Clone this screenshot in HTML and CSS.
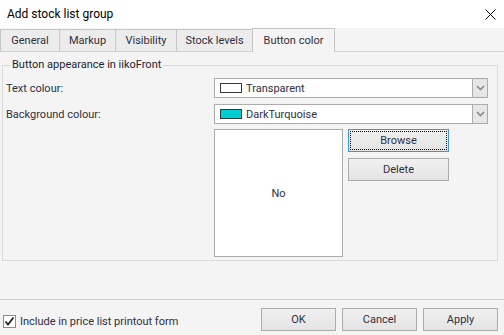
FILE: index.html
```html
<!DOCTYPE html>
<html>
  <head>
    <link rel="stylesheet" href="styles.css">
  </head>
  <body>
    <div class="window">
      <div class="titlebar">
        <span>Add stock list group</span>
        <svg class="close" width="11" height="11" viewBox="0 0 11 11">
          <path d="M0.5 0.5 L10.5 10.5 M10.5 0.5 L0.5 10.5" stroke="#000" stroke-width="1" fill="none"/>
        </svg>
      </div>
      <div class="tabs">
        <div class="tab tab-general">General</div>
        <div class="tab tab-markup">Markup</div>
        <div class="tab tab-visibility">Visibility</div>
        <div class="tab tab-stock">Stock levels</div>
        <div class="tab active">Button color</div>
      </div>
      <div class="page">
        <fieldset class="group">
          <legend>Button appearance in iikoFront</legend>
          <div class="row">
            <label>Text colour:</label>
            <div class="combo">
              <span class="swatch"></span>
              <span class="combo-text">Transparent</span>
              <span class="arrow">
                <svg width="9" height="6" viewBox="0 0 9 6"><path d="M1 1 L4.5 4.5 L8 1" stroke="#8a8a8a" stroke-width="1.6" fill="none"/></svg>
              </span>
            </div>
          </div>
          <div class="row">
            <label>Background colour:</label>
            <div class="combo">
              <span class="swatch turquoise"></span>
              <span class="combo-text">DarkTurquoise</span>
              <span class="arrow">
                <svg width="9" height="6" viewBox="0 0 9 6"><path d="M1 1 L4.5 4.5 L8 1" stroke="#8a8a8a" stroke-width="1.6" fill="none"/></svg>
              </span>
            </div>
          </div>
          <div class="image-row">
            <div class="picture">No</div>
            <div class="pic-buttons">
              <button class="btn focused">Browse</button>
              <button class="btn">Delete</button>
            </div>
          </div>
        </fieldset>
      </div>
      <div class="footer">
        <label class="check">
          <span class="checkbox">
            <svg width="11" height="11" viewBox="0 0 11 11"><path d="M1.5 5.5 L4 8.5 L9.5 1.5" stroke="#222" stroke-width="1.8" fill="none"/></svg>
          </span>
          Include in price list printout form
        </label>
        <div class="actions">
          <button class="btn wide">OK</button>
          <button class="btn wide">Cancel</button>
          <button class="btn wide">Apply</button>
        </div>
      </div>
    </div>
  </body>
</html>
```

FILE: styles.css
```css
html, body {
  margin: 0;
  padding: 0;
}

body {
  width: 504px;
  height: 335px;
  overflow: hidden;
  background-color: #f4f4f4;
  color: #30303f;
  font-family: Roboto, "Liberation Sans", sans-serif;
  font-size: 11px;
}

.window {
  display: flex;
  flex-direction: column;
  height: 335px;
}

.titlebar {
  height: 28px;
  background-color: #fff;
  display: flex;
  align-items: center;
  justify-content: space-between;
  padding: 0 8px 0 7px;
  font-size: 12px;
  color: #000;
}

.tabs {
  display: flex;
  align-items: flex-start;
  height: 23px;
  border-bottom: 1px solid #d2d2d2;
}

.tab {
  box-sizing: border-box;
  margin-top: 1px;
  height: 22px;
  border: 1px solid #c6c6c6;
  border-right: none;
  border-bottom: none;
  background-color: #ececec;
  display: flex;
  align-items: center;
  justify-content: center;
}

.tab-general { width: 59px; }
.tab-markup { width: 56px; }
.tab-visibility { width: 61px; }
.tab-stock { width: 76px; }

.tab.active {
  margin-top: 0;
  height: 24px;
  width: 83px;
  border-right: 1px solid #c6c6c6;
  background-color: #f4f4f4;
  padding-bottom: 1px;
}

.page {
  flex: 1;
}

.group {
  box-sizing: border-box;
  width: 496px;
  min-width: 0;
  margin: 6px 0 0 2px;
  padding: 6px 0 3px 3px;
  border: 1px solid #dadada;
}

.group legend {
  margin-left: 4px;
  padding: 0 2px;
  line-height: 14px;
  color: #1e1e2e;
}

.row {
  display: flex;
  align-items: center;
  height: 20px;
  margin-bottom: 6px;
}

.row label {
  width: 208px;
}

.combo {
  box-sizing: border-box;
  width: 274px;
  height: 20px;
  border: 1px solid #acacac;
  background-color: #fff;
  display: flex;
  align-items: center;
}

.swatch {
  box-sizing: border-box;
  width: 22px;
  height: 10px;
  margin: 0 4px 0 5px;
  border: 1px solid #3a3a3a;
  background-color: #fff;
}

.swatch.turquoise {
  background-color: #00ced1;
}

.combo-text {
  flex: 1;
}

.arrow {
  box-sizing: border-box;
  width: 15px;
  height: 18px;
  border-left: 1px solid #acacac;
  background-color: #e6e6e6;
  display: flex;
  align-items: center;
  justify-content: center;
}

.image-row {
  display: flex;
  align-items: flex-start;
  margin-top: -1px;
  padding-left: 208px;
}

.picture {
  box-sizing: border-box;
  width: 129px;
  height: 128px;
  border: 1px solid #acacac;
  background-color: #fff;
  display: flex;
  align-items: center;
  justify-content: center;
}

.pic-buttons {
  display: flex;
  flex-direction: column;
  gap: 6px;
  margin-left: 5px;
}

.btn {
  box-sizing: border-box;
  width: 101px;
  height: 23px;
  padding: 0;
  border: 1px solid #acacac;
  background: linear-gradient(#f0f0f0, #e4e4e4);
  color: #30303f;
  font: inherit;
}

.btn.focused {
  border-color: #3c96e8;
  outline: 1px dotted #000;
  outline-offset: -3px;
}

.btn.wide {
  width: 75px;
}

.footer {
  height: 36px;
  box-sizing: border-box;
  border-top: 1px solid #cacaca;
  display: flex;
  justify-content: space-between;
  align-items: flex-start;
  padding: 8px 6px 0 3px;
}

.check {
  display: flex;
  align-items: center;
  gap: 4px;
  margin-top: 7px;
}

.checkbox {
  box-sizing: border-box;
  width: 13px;
  height: 13px;
  border: 1px solid #8c8c8c;
  background-color: #fff;
  display: flex;
  align-items: center;
  justify-content: center;
}

.actions {
  display: flex;
  gap: 6px;
}
```
